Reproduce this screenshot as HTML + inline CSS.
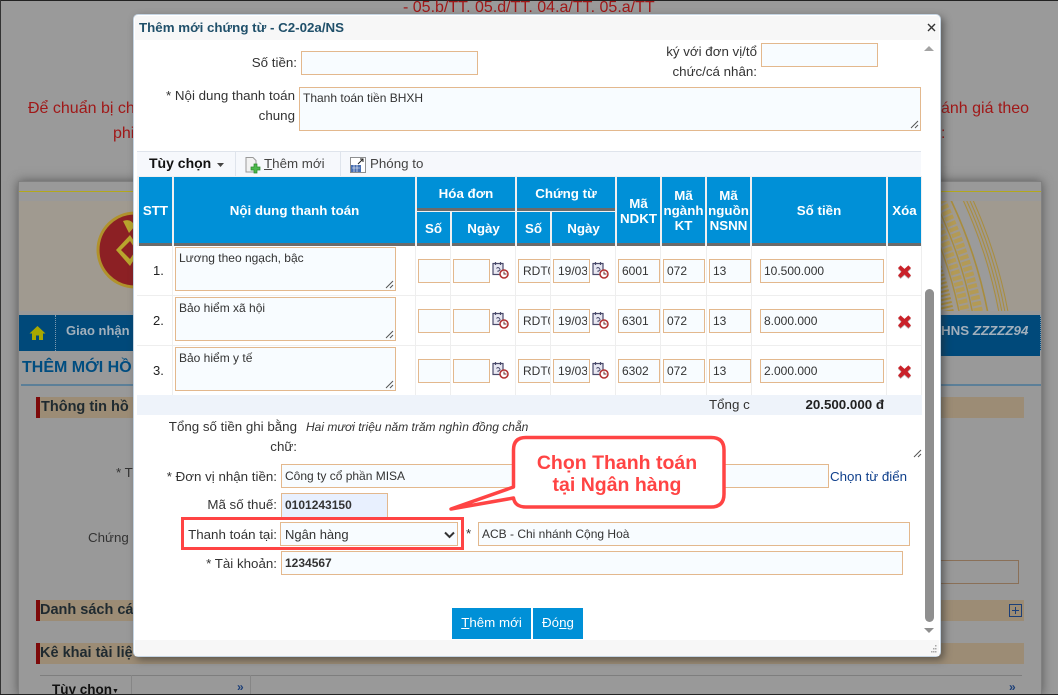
<!DOCTYPE html>
<html lang="vi"><head><meta charset="utf-8"><title>Thêm mới chứng từ</title>
<style>
html{margin:0;padding:0;width:1058px;height:695px;overflow:hidden}
body{margin:0;padding:0;width:1058px;height:695px;overflow:hidden;position:relative;background:#9a9a9a;font:12px/20px "Liberation Sans",Arial,sans-serif;color:#222}
#w{position:absolute;left:0;top:0;width:1058px;height:695px;overflow:hidden}
.a,.t,.i,.h{position:absolute}
.t{white-space:nowrap}
.r{text-align:right}
.i{box-sizing:border-box;background:#f8fcff;border:1px solid #e3b88d;font-size:12px;line-height:22px;padding-left:3px;white-space:nowrap;overflow:hidden;color:#333}
.d{padding-left:4px}
.d span{display:inline-block;width:29px;height:22px;overflow:hidden;vertical-align:top}
.h{box-sizing:border-box;background:#0090d7;color:#fff;font-weight:bold;text-align:center;display:flex;align-items:center;justify-content:center;line-height:15px;font-size:13.33px;border-bottom:3px solid #6b6b6b;padding-top:1px;white-space:nowrap}
.s{padding-top:2px}
.ta{box-sizing:border-box;position:absolute;background:#f8fcff;border:1px solid #e3b88d;padding:3px 3px;line-height:15px;font-size:12px;color:#333}
.rs{position:absolute;right:1px;bottom:1px;width:10px;height:10px}
.red{color:#a01818;font-size:16px;line-height:24px}
.band{position:absolute;left:36px;width:988px;height:21px;background:#9c8c75;border-left:4px solid #7d0a0a;box-sizing:border-box;color:#1f2a30;font-weight:bold;font-size:14.5px;line-height:20px;white-space:nowrap}
.lb{color:#333;font-size:13.33px}
.c{position:absolute;width:18px;height:19px}
.x{position:absolute;width:13px;height:13px;filter:drop-shadow(0 1px 0 #bbb)}
.ln{position:absolute;background:#eeeeee}
</style></head><body><div id="w">

<!-- dim page behind -->
<div class="a" style="left:0;top:0;width:1058px;height:1px;background:#222"></div>
<div class="a" style="left:0;top:0;width:1px;height:695px;background:#333"></div>
<div class="t red" style="left:403px;top:-4px">- 05.b/TT. 05.d/TT. 04.a/TT. 05.a/TT</div>
<div class="t red" style="left:28px;top:97px">Để chuẩn bị ch</div>
<div class="t red" style="left:113px;top:122px">phi</div>
<div class="t red" style="left:941px;top:97px">ánh giá theo</div>
<div class="t red" style="left:941px;top:122px">:</div>

<div class="a" style="left:18px;top:181px;width:1024px;height:514px;background:#999;border:1px solid #808080;border-bottom:0;box-sizing:border-box;box-shadow:0 0 10px #555"></div>
<div class="a" style="left:19px;top:191px;width:1022px;height:1px;background:#b3a81c"></div>
<div class="a" style="left:19px;top:201px;width:1022px;height:110px;background:#a09a90;overflow:hidden">
<svg width="1022" height="110" style="position:absolute;left:0;top:0" fill="none">
<defs><clipPath id="rb"><rect x="900" y="200" width="150" height="112"/></clipPath></defs>
<circle cx="116" cy="49" r="37" fill="#8c2024" stroke="#b0922c" stroke-width="3"/>
<path d="M97 49l14-15 10 15-10 16zM102 49l9-9 6 9-6 9z" fill="#b9a52d" fill-rule="evenodd"/>
<path d="M104 20q8-3 12 5l-6 7z" fill="#b9a52d"/>
<g transform="translate(-19,-201)" clip-path="url(#rb)">
<circle cx="530" cy="400" r="471" stroke="#9b9b9b" stroke-width="10"/>
<circle cx="530" cy="400" r="486" stroke="#a98d3d"/><circle cx="530" cy="400" r="483" stroke="#a98d3d"/><circle cx="530" cy="400" r="480" stroke="#a98d3d"/><circle cx="530" cy="400" r="477" stroke="#a98d3d"/>
<circle cx="530" cy="400" r="466" stroke="#a98d3d" stroke-width="1.6"/>
<circle cx="530" cy="400" r="457" stroke="#b39a55" stroke-width="9" stroke-dasharray="4 2"/>
<circle cx="530" cy="400" r="451" stroke="#a98d3d" stroke-width="1.4"/>
<circle cx="530" cy="400" r="444" stroke="#b39a55" stroke-width="9" stroke-dasharray="4 2"/>
<circle cx="530" cy="400" r="438" stroke="#a98d3d" stroke-width="1.4"/>
<circle cx="530" cy="400" r="425" stroke="#a98d3d" stroke-width="16" stroke-dasharray="2 2"/>
</g></svg></div>
<div class="a" style="left:19px;top:315px;width:1022px;height:36px;background:#00497a"></div>
<div class="a" style="left:930px;top:351px;width:110px;height:5px;background:#00497a"></div>
<div class="a" style="left:1040px;top:315px;width:0;height:36px;border-left:1px dotted #7d9ab0"></div>
<svg class="a" style="left:29px;top:325px" width="17" height="16" viewBox="0 0 17 16"><path d="M8.500 1L0.500 8.500H3V15H7V10.500H10V15H14V8.500H16.500Z" fill="#a8a800"/></svg>
<div class="a" style="left:55px;top:315px;width:0;height:36px;border-left:1px dotted #7d9ab0"></div>
<div class="t" style="left:66px;top:321px;color:#a2b0bc;font-weight:bold;font-size:13px">Giao nhận</div>
<div class="t" style="left:941px;top:321px;color:#a2b0bc;font-weight:bold;font-size:13.33px;font-style:italic"><span style="font-style:normal">HNS</span> ZZZZZ94</div>
<div class="t" style="left:22px;top:358px;color:#004d80;font-weight:bold;font-size:16px">THÊM MỚI HỒ</div>
<div class="a" style="left:21px;top:384px;width:1020px;height:2px;background:#5c7f98"></div>
<div class="band" style="top:397px;padding-left:1px">Thông tin hồ</div>
<div class="t lb" style="left:116px;top:463px">* T</div>
<div class="t lb" style="left:88px;top:528px">Chứng</div>
<div class="a" style="left:930px;top:560px;width:89px;height:24px;border:1px solid #8a7058;box-sizing:border-box"></div>
<div class="band" style="top:600px">Danh sách cá</div>
<svg class="a" style="left:1009px;top:604px" width="14" height="13"><rect x=".5" y=".5" width="12" height="12" fill="none" stroke="#1c3f78"/><path d="M6.500 3v7M3 6.500h7" stroke="#1c3f78"/></svg>
<div class="band" style="top:643px">Kê khai tài liệ</div>
<div class="a" style="left:40px;top:675px;width:982px;height:1px;background:#7e7e7e"></div>
<div class="a" style="left:131px;top:675px;width:1px;height:20px;background:#868686"></div>
<div class="a" style="left:250px;top:675px;width:1px;height:20px;background:#868686"></div>
<div class="t" style="left:52px;top:680px;height:15px;overflow:hidden;font-weight:bold;font-size:13.5px;color:#111">Tùy chọn<span style="font-size:7px;vertical-align:1px">▼</span></div>
<div class="t" style="left:237px;top:677px;height:18px;overflow:hidden;color:#1c3f78;font-weight:bold">»</div>
<div class="t" style="left:1009px;top:677px;height:18px;overflow:hidden;color:#1c3f78;font-weight:bold">»</div>
<div class="a" style="left:0;top:694px;width:1058px;height:1px;background:#222"></div>

<!-- modal -->
<div class="a" style="left:133px;top:14px;width:808px;height:643px;background:#fff;border:1px solid #c5d4e2;border-radius:5px;box-sizing:border-box;box-shadow:3px 3px 8px rgba(40,40,40,.55)"></div>
<div class="a" style="left:135px;top:16px;width:804px;height:24px;background:#f7f7f7"></div>
<div class="t" style="left:139px;top:18px;font-weight:bold;color:#20506a;font-size:13.33px">Thêm mới chứng từ - C2-02a/NS</div>
<svg class="a" style="left:927px;top:23px" width="9" height="9"><path d="M1 1l7 7M8 1L1 8" stroke="#333" stroke-width="1.4"/></svg>
<div class="a" style="left:135px;top:640px;width:804px;height:16px;background:#f7f7f7"></div>
<svg class="a" style="left:928px;top:645px" width="10" height="10" fill="#a8a8a8"><rect x="7" y="0" width="1.500" height="1.500"/><rect x="5" y="3" width="1.500" height="1.500"/><rect x="7" y="3" width="1.500" height="1.500"/><rect x="3" y="6" width="1.500" height="1.500"/><rect x="5" y="6" width="1.500" height="1.500"/><rect x="7" y="6" width="1.500" height="1.500"/></svg>
<!-- scrollbar -->
<svg class="a" style="left:924px;top:45px" width="10" height="7"><path d="M0 6L5 1l5 5z" fill="#a3a3a3"/></svg>
<div class="a" style="left:925px;top:289px;width:9px;height:333px;background:#8f8f8f;border-radius:5px"></div>
<svg class="a" style="left:924px;top:627px" width="10" height="7"><path d="M0 1l5 5 5-5z" fill="#8f8f8f"/></svg>

<!-- top form -->
<div class="t r lb" style="right:761px;top:53px">Số tiền:</div>
<div class="i" style="left:301px;top:51px;width:177px;height:24px"></div>
<div class="t r lb" style="right:301px;top:42px">ký với đơn vị/tổ</div>
<div class="t r lb" style="right:301px;top:62px">chức/cá nhân:</div>
<div class="i" style="left:761px;top:43px;width:117px;height:24px"></div>
<div class="t r lb" style="right:763px;top:86px">* Nội dung thanh toán</div>
<div class="t r lb" style="right:763px;top:106px">chung</div>
<div class="ta" style="left:299px;top:87px;width:622px;height:44px">Thanh toán tiền BHXH<svg class="rs" viewBox="0 0 10 10"><path d="M9 2L2 9M9 6L6 9" stroke="#555"/></svg></div>

<!-- toolbar -->
<div class="a" style="left:137px;top:151px;width:784px;height:25px;background:#f6f8fc;border-top:1px solid #dfe4ec;box-sizing:border-box"></div>
<div class="t" style="left:149px;top:153px;font-weight:bold;font-size:14px;color:#111">Tùy chọn</div>
<svg class="a" style="left:217px;top:163px" width="7" height="4"><path d="M0 0h7L3.500 4z" fill="#444"/></svg>
<div class="a" style="left:235px;top:152px;width:1px;height:24px;background:#dfe4ec"></div>
<div class="a" style="left:340px;top:152px;width:1px;height:24px;background:#dfe4ec"></div>
<svg class="a" style="left:245px;top:157px" width="17" height="17" viewBox="0 0 17 17"><path d="M1 .5h7l3 3V15H1z" fill="#f2f2f2" stroke="#999"/><path d="M9 7h3v3h3v3h-3v3H9v-3H6v-3h3z" fill="#4cb84c" stroke="#2a8a2a" stroke-width=".7"/></svg>
<div class="t lb" style="left:264px;top:154px;color:#444"><u>T</u>hêm mới</div>
<svg class="a" style="left:350px;top:157px" width="16" height="16" viewBox="0 0 16 16"><rect x=".5" y=".5" width="15" height="15" fill="#fff" stroke="#222" stroke-dasharray="1 1"/><rect x="1" y="8" width="10" height="7" fill="#4a6fb0"/><path d="M2 11h8M4 8v7M7 8v7" stroke="#fff" stroke-width=".6"/><path d="M8 7l5-5M10 2h3v3" stroke="#222" fill="none"/></svg>
<div class="t lb" style="left:370px;top:154px;color:#444">Phóng to</div>

<!-- table header -->
<div class="a" style="left:137px;top:176px;width:785px;height:239px;background:#fff"></div>
<div class="a" style="left:137px;top:176px;width:785px;height:70px;background:#f0f0f0"></div>
<div class="h" style="left:139px;top:177px;width:33px;height:69px">STT</div>
<div class="h" style="left:174px;top:177px;width:241px;height:69px">Nội dung thanh toán</div>
<div class="h" style="left:417px;top:177px;width:98px;height:34px">Hóa đơn</div>
<div class="h" style="left:517px;top:177px;width:98px;height:34px">Chứng từ</div>
<div class="h s" style="left:417px;top:212px;width:33px;height:34px">Số</div>
<div class="h s" style="left:452px;top:212px;width:63px;height:34px">Ngày</div>
<div class="h s" style="left:517px;top:212px;width:33px;height:34px">Số</div>
<div class="h s" style="left:552px;top:212px;width:63px;height:34px">Ngày</div>
<div class="h" style="left:617px;top:177px;width:43px;height:69px">Mã<br>NDKT</div>
<div class="h" style="left:662px;top:177px;width:43px;height:69px">Mã<br>ngành<br>KT</div>
<div class="h" style="left:707px;top:177px;width:43px;height:69px">Mã<br>nguồn<br>NSNN</div>
<div class="h" style="left:752px;top:177px;width:134px;height:69px">Số tiền</div>
<div class="h" style="left:888px;top:177px;width:33px;height:69px">Xóa</div>

<!-- row grid -->
<div class="ln" style="left:137px;top:295px;width:785px;height:1px"></div>
<div class="ln" style="left:137px;top:345px;width:785px;height:1px"></div>
<div class="ln" style="left:172px;top:246px;width:1px;height:149px"></div>
<div class="ln" style="left:415px;top:246px;width:1px;height:149px"></div>
<div class="ln" style="left:450px;top:246px;width:1px;height:149px"></div>
<div class="ln" style="left:515px;top:246px;width:1px;height:149px"></div>
<div class="ln" style="left:550px;top:246px;width:1px;height:149px"></div>
<div class="ln" style="left:615px;top:246px;width:1px;height:149px"></div>
<div class="ln" style="left:660px;top:246px;width:1px;height:149px"></div>
<div class="ln" style="left:706px;top:246px;width:1px;height:149px"></div>
<div class="ln" style="left:751px;top:246px;width:1px;height:149px"></div>
<div class="ln" style="left:886px;top:246px;width:1px;height:149px"></div>
<div class="ln" style="left:921px;top:246px;width:1px;height:149px"></div>

<svg width="0" height="0" style="position:absolute"><defs>
<symbol id="cal" viewBox="0 0 18 19"><rect x="1" y="2.500" width="10" height="11" fill="#e8e8f2" stroke="#4a4a6a" stroke-width="1.200"/><path d="M3.500 1v3M8.500 1v3" stroke="#4a4a6a" stroke-width="1.200"/><path d="M4.500 7.500q1.500-2 3 0t-1.500 2.500v1" stroke="#4a4a6a" fill="none"/><circle cx="12" cy="13" r="4" fill="#fff" stroke="#b03030" stroke-width="1.500"/><path d="M12 10.500V13h2.500" stroke="#703030" fill="none"/></symbol>
<symbol id="del" viewBox="0 0 15 15"><path d="M3 .5l4.500 4L12 .5l3 3L11 7.500l4 4.500-3 3-4.500-4-4.500 4-3-3 4-4.500-4-4z" fill="#c9222a"/></symbol>
</defs></svg>

<!-- row 1 -->
<div class="t" style="left:153px;top:261px;font-size:13px">1.</div>
<div class="ta" style="left:175px;top:247px;width:221px;height:44px">Lương theo ngạch, bậc<svg class="rs" viewBox="0 0 10 10"><path d="M9 2L2 9M9 6L6 9" stroke="#555"/></svg></div>
<div class="i" style="left:418px;top:259px;width:32px;height:24px;border-right:0"></div>
<div class="i" style="left:453px;top:259px;width:37px;height:24px"></div>
<svg class="c" style="left:492px;top:261px"><use href="#cal"/></svg>
<div class="i" style="left:518px;top:259px;width:32px;height:24px;border-right:0;padding-left:4px">RDT00</div>
<div class="i d" style="left:553px;top:259px;width:37px;height:24px"><span>19/03</span></div>
<svg class="c" style="left:592px;top:261px"><use href="#cal"/></svg>
<div class="i" style="left:618px;top:259px;width:42px;height:24px">6001</div>
<div class="i" style="left:663px;top:259px;width:42px;height:24px">072</div>
<div class="i" style="left:709px;top:259px;width:42px;height:24px">13</div>
<div class="i" style="left:760px;top:259px;width:124px;height:24px">10.500.000</div>
<svg class="x" style="left:898px;top:265px"><use href="#del"/></svg>
<!-- row 2 -->
<div class="t" style="left:153px;top:311px;font-size:13px">2.</div>
<div class="ta" style="left:175px;top:297px;width:221px;height:44px">Bảo hiểm xã hội<svg class="rs" viewBox="0 0 10 10"><path d="M9 2L2 9M9 6L6 9" stroke="#555"/></svg></div>
<div class="i" style="left:418px;top:309px;width:32px;height:24px;border-right:0"></div>
<div class="i" style="left:453px;top:309px;width:37px;height:24px"></div>
<svg class="c" style="left:492px;top:311px"><use href="#cal"/></svg>
<div class="i" style="left:518px;top:309px;width:32px;height:24px;border-right:0;padding-left:4px">RDT00</div>
<div class="i d" style="left:553px;top:309px;width:37px;height:24px"><span>19/03</span></div>
<svg class="c" style="left:592px;top:311px"><use href="#cal"/></svg>
<div class="i" style="left:618px;top:309px;width:42px;height:24px">6301</div>
<div class="i" style="left:663px;top:309px;width:42px;height:24px">072</div>
<div class="i" style="left:709px;top:309px;width:42px;height:24px">13</div>
<div class="i" style="left:760px;top:309px;width:124px;height:24px">8.000.000</div>
<svg class="x" style="left:898px;top:315px"><use href="#del"/></svg>
<!-- row 3 -->
<div class="t" style="left:153px;top:361px;font-size:13px">3.</div>
<div class="ta" style="left:175px;top:347px;width:221px;height:44px">Bảo hiểm y tế<svg class="rs" viewBox="0 0 10 10"><path d="M9 2L2 9M9 6L6 9" stroke="#555"/></svg></div>
<div class="i" style="left:418px;top:359px;width:32px;height:24px;border-right:0"></div>
<div class="i" style="left:453px;top:359px;width:37px;height:24px"></div>
<svg class="c" style="left:492px;top:361px"><use href="#cal"/></svg>
<div class="i" style="left:518px;top:359px;width:32px;height:24px;border-right:0;padding-left:4px">RDT00</div>
<div class="i d" style="left:553px;top:359px;width:37px;height:24px"><span>19/03</span></div>
<svg class="c" style="left:592px;top:361px"><use href="#cal"/></svg>
<div class="i" style="left:618px;top:359px;width:42px;height:24px">6302</div>
<div class="i" style="left:663px;top:359px;width:42px;height:24px">072</div>
<div class="i" style="left:709px;top:359px;width:42px;height:24px">13</div>
<div class="i" style="left:760px;top:359px;width:124px;height:24px">2.000.000</div>
<svg class="x" style="left:898px;top:365px"><use href="#del"/></svg>

<!-- total row -->
<div class="a" style="left:137px;top:395px;width:785px;height:20px;background:#eef3fa"></div>
<div class="a lb" style="left:709px;top:395px;width:41px;height:20px;overflow:hidden;white-space:nowrap">Tổng cộng</div>
<div class="t r" style="right:174px;top:395px;font-weight:bold;font-size:13.33px">20.500.000 đ</div>

<!-- bottom form -->
<div class="t r lb" style="right:761px;top:417px">Tổng số tiền ghi bằng</div>
<div class="t r lb" style="right:761px;top:437px">chữ:</div>
<div class="t" style="left:306px;top:417px;font-style:italic;color:#333">Hai mươi triệu năm trăm nghìn đồng chẵn</div>
<svg class="a" style="left:912px;top:448px" width="10" height="10"><path d="M9 2L2 9M9 6L6 9" stroke="#555"/></svg>
<div class="t r lb" style="right:781px;top:467px">* Đơn vị nhận tiền:</div>
<div class="i" style="left:281px;top:464px;width:548px;height:24px">Công ty cổ phần MISA</div>
<div class="t lb" style="left:830px;top:467px;color:#10408c">Chọn từ điển</div>
<div class="t r lb" style="right:781px;top:495px">Mã số thuế:</div>
<div class="i" style="left:281px;top:493px;width:107px;height:26px;background:#e8f0fe;font-weight:bold">0101243150</div>
<div class="t r lb" style="right:781px;top:525px">Thanh toán tại:</div>
<div class="i" style="left:280px;top:522px;width:178px;height:24px;font-size:13px;line-height:24px;padding-left:4px">Ngân hàng<svg class="a" style="left:163px;top:8px" width="11" height="8"><path d="M1 1.500l4.500 4.500L10 1.500" fill="none" stroke="#333" stroke-width="2"/></svg></div>
<div class="t lb" style="left:466px;top:524px">*</div>
<div class="i" style="left:478px;top:522px;width:432px;height:24px">ACB - Chi nhánh Cộng Hoà</div>
<div class="t r lb" style="right:781px;top:554px">* Tài khoản:</div>
<div class="i" style="left:281px;top:551px;width:622px;height:24px;font-weight:bold">1234567</div>
<div class="t" style="left:452px;top:608px;width:79px;height:31px;line-height:30px;background:#0090d7;color:#fff;text-align:center;font-size:13.33px"><u>T</u>hêm mới</div>
<div class="t" style="left:533px;top:608px;width:50px;height:31px;line-height:30px;background:#0090d7;color:#fff;text-align:center;font-size:13.33px">Đó<u>n</u>g</div>

<!-- annotations -->
<div class="a" style="left:181px;top:517px;width:283px;height:33px;border:3px solid #ff4444;box-sizing:border-box"></div>
<svg class="a" style="left:440px;top:430px" width="295" height="85" viewBox="440 430 295 85"><path d="M526 437.500H711Q724 437.500 724 450V494Q724 507 711 507H526Q515 507 513.500 498L451 509L513.500 487V450Q513.500 437.500 526 437.500Z" fill="#fff" stroke="#ff4444" stroke-width="3.500" stroke-linejoin="round"/></svg>
<div class="t" style="left:512px;top:452px;width:210px;text-align:center;color:#ff4444;font-weight:bold;font-size:19.5px;line-height:22px">Chọn Thanh toán<br>tại Ngân hàng</div>
</div></body></html>
